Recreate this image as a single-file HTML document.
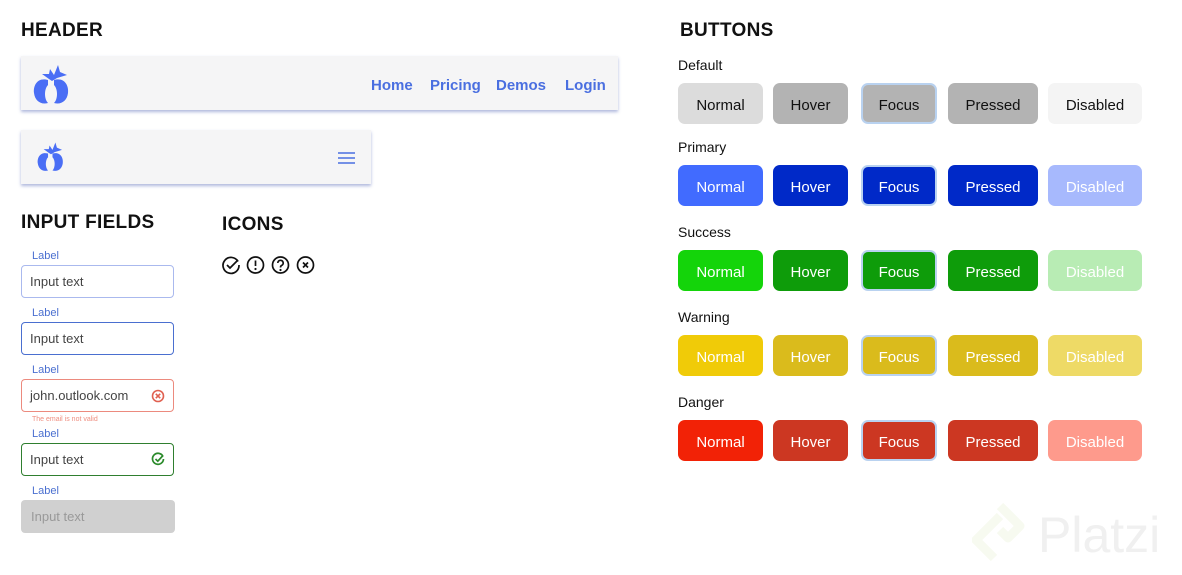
<!DOCTYPE html><html><head><style>
body{margin:0;width:1182px;height:575px;background:#fff;position:relative;overflow:hidden;font-family:"Liberation Sans",sans-serif}
.a{position:absolute}
h2{position:absolute;margin:0;font-size:19px;font-weight:bold;color:#111;letter-spacing:.3px}
.bar{position:absolute;background:#f5f5f6;box-shadow:0 2px 3px rgba(80,100,180,.45)}
.nav{position:absolute;top:77px;font-weight:bold;font-size:15px;color:#4a6fe0}
.lbl{position:absolute;left:32px;font-size:11px;color:#4a6fd0}
.in{position:absolute;left:21px;width:143px;height:31px;border:1px solid #aab9ee;border-radius:4px;font-size:13px;color:#444;line-height:31px;padding-left:8px;box-sizing:content-box}
.cap{position:absolute;left:678px;font-size:14px;color:#111}
.b{position:absolute;height:41px;border-radius:7px;font-size:15px;display:flex;align-items:center;justify-content:center;color:#fff;box-sizing:border-box;padding-top:3px}
.f{border:2px solid #b9d2f0}
</style></head><body>
<h2 style="left:21px;top:20px">HEADER</h2>
<h2 style="left:21px;top:212px">INPUT FIELDS</h2>
<h2 style="left:222px;top:214px">ICONS</h2>
<h2 style="left:680px;top:20px">BUTTONS</h2>

<div class="bar" style="left:21px;top:56px;width:597px;height:54px"></div>
<svg class="a" style="left:33px;top:63px" width="38" height="42" viewBox="0 0 38 42"><path d="M15 17 C5 14 0 22 1 30 C2 38 8 42 15 40 C11 36 11 26 15 22Z M21 17 C31 14 36 22 35 30 C34 38 28 42 21 40 C25 36 25 26 21 22Z M16 16 L9 11 L16 11 L17 6 L21 12 L25 2 L27 9 L34 12 L24 15 L19 18Z" fill="#4a6ef5"/></svg>
<div class="nav" style="left:371px">Home</div>
<div class="nav" style="left:430px">Pricing</div>
<div class="nav" style="left:496px">Demos</div>
<div class="nav" style="left:565px">Login</div>

<div class="bar" style="left:21px;top:130px;width:350px;height:54px"></div>
<svg class="a" style="left:37px;top:141px" width="28" height="31" viewBox="0 0 38 42"><path d="M15 17 C5 14 0 22 1 30 C2 38 8 42 15 40 C11 36 11 26 15 22Z M21 17 C31 14 36 22 35 30 C34 38 28 42 21 40 C25 36 25 26 21 22Z M16 16 L9 11 L16 11 L17 6 L21 12 L25 2 L27 9 L34 12 L24 15 L19 18Z" fill="#4a6ef5"/></svg>
<svg class="a" style="left:338px;top:151px" width="18" height="14"><path d="M0 2H17M0 7H17M0 12H17" stroke="#4a6ee0" stroke-width="1.6"/></svg>

<div class="lbl" style="top:250px">Label</div>
<div class="in" style="top:265px">Input text</div>
<div class="lbl" style="top:307px">Label</div>
<div class="in" style="top:322px;border-color:#4a6fd0">Input text</div>
<div class="lbl" style="top:364px">Label</div>
<div class="in" style="top:379px;border-color:#ec8a7e">john.outlook.com</div>
<svg class="a" style="left:151px;top:389px" width="14" height="14"><circle cx="7" cy="7" r="5.5" fill="none" stroke="#e06050" stroke-width="1.6"/><path d="M4.8 4.8L9.2 9.2M9.2 4.8L4.8 9.2" stroke="#e06050" stroke-width="1.6"/></svg>
<div class="a" style="left:32px;top:416px;font-size:7px;color:#ef8e80">The email is not valid</div>
<div class="lbl" style="top:428px">Label</div>
<div class="in" style="top:443px;border-color:#2f7f2f">Input text</div>
<svg class="a" style="left:151px;top:452px" width="14" height="14"><path d="M12 4.5A5.5 5.5 0 1 0 12.5 7" fill="none" stroke="#2a8a2a" stroke-width="1.7"/><path d="M4.5 7L6.8 9.2L12 3.5" fill="none" stroke="#2a8a2a" stroke-width="1.7"/></svg>
<div class="lbl" style="top:485px">Label</div>
<div class="in" style="top:500px;border:none;background:#d0d0d0;color:#999;height:33px;line-height:33px;width:144px;padding-left:10px">Input text</div>

<svg class="a" style="left:221px;top:255px" width="96" height="20"><g fill="none" stroke="#111" stroke-width="1.7"><path d="M17 6.5A8 8 0 1 0 18 10"/><path d="M6 10L9 13L17 5"/><circle cx="34.5" cy="10" r="8"/><path d="M34.5 5.5V11"/><circle cx="59.5" cy="10" r="8"/><path d="M56.8 8A2.7 2.7 0 1 1 60.5 10.5C59.6 11 59.5 11.6 59.5 12.5"/><circle cx="84.5" cy="10" r="8"/><path d="M82 7.5L87 12.5M87 7.5L82 12.5"/></g><circle cx="34.5" cy="14" r="1.1" fill="#111"/><circle cx="59.5" cy="15" r="1.1" fill="#111"/></svg>

<div class="cap" style="top:57px">Default</div>
<div class="cap" style="top:139px">Primary</div>
<div class="cap" style="top:224px">Success</div>
<div class="cap" style="top:309px">Warning</div>
<div class="cap" style="top:394px">Danger</div>

<div class="b" style="left:678px;top:83px;width:85px;background:#dcdcdc;color:#111">Normal</div>
<div class="b" style="left:773px;top:83px;width:75px;background:#b3b3b3;color:#111">Hover</div>
<div class="b f" style="left:861px;top:83px;width:76px;background:#b3b3b3;color:#111">Focus</div>
<div class="b" style="left:948px;top:83px;width:90px;background:#b3b3b3;color:#111">Pressed</div>
<div class="b" style="left:1048px;top:83px;width:94px;background:#f4f4f4;color:#111">Disabled</div>

<div class="b" style="left:678px;top:165px;width:85px;background:#416bff">Normal</div>
<div class="b" style="left:773px;top:165px;width:75px;background:#0029c8">Hover</div>
<div class="b f" style="left:861px;top:165px;width:76px;background:#0029c8">Focus</div>
<div class="b" style="left:948px;top:165px;width:90px;background:#0029c8">Pressed</div>
<div class="b" style="left:1048px;top:165px;width:94px;background:#a7b9fd">Disabled</div>

<div class="b" style="left:678px;top:250px;width:85px;background:#14d40a">Normal</div>
<div class="b" style="left:773px;top:250px;width:75px;background:#0e9c0a">Hover</div>
<div class="b f" style="left:861px;top:250px;width:76px;background:#0e9c0a">Focus</div>
<div class="b" style="left:948px;top:250px;width:90px;background:#0e9c0a">Pressed</div>
<div class="b" style="left:1048px;top:250px;width:94px;background:#b8ecb4">Disabled</div>

<div class="b" style="left:678px;top:335px;width:85px;background:#f0cb08">Normal</div>
<div class="b" style="left:773px;top:335px;width:75px;background:#dabb1c">Hover</div>
<div class="b f" style="left:861px;top:335px;width:76px;background:#dabb1c">Focus</div>
<div class="b" style="left:948px;top:335px;width:90px;background:#dabb1c">Pressed</div>
<div class="b" style="left:1048px;top:335px;width:94px;background:#eeda66">Disabled</div>

<div class="b" style="left:678px;top:420px;width:85px;background:#f22206">Normal</div>
<div class="b" style="left:773px;top:420px;width:75px;background:#cc3722">Hover</div>
<div class="b f" style="left:861px;top:420px;width:76px;background:#cc3722">Focus</div>
<div class="b" style="left:948px;top:420px;width:90px;background:#cc3722">Pressed</div>
<div class="b" style="left:1048px;top:420px;width:94px;background:#fe9a8c">Disabled</div>

<svg class="a" style="left:972px;top:502px" width="60" height="66"><path d="M28 4L48 24L36 36L28 28M22 56L4 38L28 14" fill="none" stroke="#f7faf0" stroke-width="9" stroke-linejoin="round"/></svg>
<div class="a" style="left:1038px;top:506px;font-size:50px;color:#f0f0f0">Platzi</div>
</body></html>
